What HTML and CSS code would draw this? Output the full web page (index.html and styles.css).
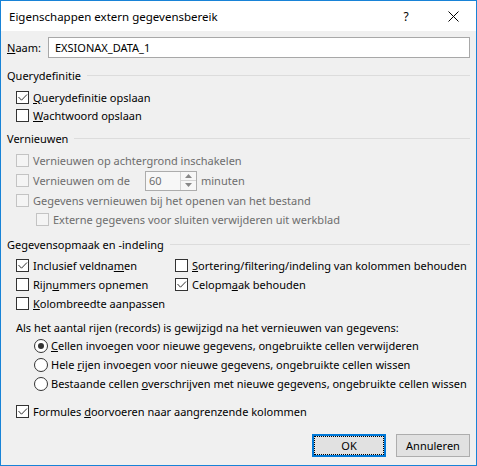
FILE: index.html
```html
<!DOCTYPE html>
<html lang="nl">
<head>
<meta charset="utf-8">
<title>Eigenschappen extern gegevensbereik</title>
<link rel="stylesheet" href="styles.css">
</head>
<body>
<div class="dialog">
  <div class="titlebar">
    <span class="title">Eigenschappen extern gegevensbereik</span>
    <div class="caption-buttons">
      <span class="cap-btn help">?</span>
      <span class="cap-btn close">
        <svg width="11" height="11" viewBox="0 0 11 11"><path d="M0.5 0.5L10.5 10.5M10.5 0.5L0.5 10.5" stroke="#000" stroke-width="1"/></svg>
      </span>
    </div>
  </div>

  <div class="content">
    <div class="name-row">
      <label class="name-label"><u>N</u>aam:</label>
      <div class="textbox">EXSIONAX_DATA_1</div>
    </div>

    <section class="group group-query">
      <div class="group-head">Querydefinitie</div>
      <div class="options">
        <div class="check row-18 checked">
          <span class="box"><svg viewBox="0 0 11 11" width="11" height="11"><path d="M1.5 5l3 3.2L10 2.5" fill="none" stroke="#333" stroke-width="1"/></svg></span>
          <span><u>Q</u>uerydefinitie opslaan</span>
        </div>
        <div class="check row-18">
          <span class="box"></span>
          <span><u>W</u>achtwoord opslaan</span>
        </div>
      </div>
    </section>

    <section class="group group-refresh">
      <div class="group-head">Vernieuwen</div>
      <div class="options">
        <div class="check row-19 disabled">
          <span class="box"></span>
          <span>Vernieuwen op achtergrond inschakelen</span>
        </div>
        <div class="check row-21 disabled">
          <span class="box"></span>
          <span class="interval-label">Vernieuwen om de</span>
          <div class="spinner">
            <span class="spin-value">60</span>
            <span class="spin-buttons">
              <span class="spin-btn"><svg width="7" height="4" viewBox="0 0 7 4"><path d="M0 4L3.5 0L7 4Z" fill="#888"/></svg></span>
              <span class="spin-btn"><svg width="7" height="4" viewBox="0 0 7 4"><path d="M0 0L3.5 4L7 0Z" fill="#888"/></svg></span>
            </span>
          </div>
          <span class="unit">minuten</span>
        </div>
        <div class="check row-19 disabled">
          <span class="box"></span>
          <span>Gegevens vernieuwen bij het openen van het bestand</span>
        </div>
        <div class="check row-19 disabled nested">
          <span class="box"></span>
          <span>Externe gegevens voor sluiten verwijderen uit werkblad</span>
        </div>
      </div>
    </section>

    <section class="group group-format">
      <div class="group-head">Gegevensopmaak en -indeling</div>
      <div class="format-grid">
        <div class="check row-19 checked">
          <span class="box"><svg viewBox="0 0 11 11" width="11" height="11"><path d="M1.5 5l3 3.2L10 2.5" fill="none" stroke="#333" stroke-width="1"/></svg></span>
          <span>Inclusief veldna<u>m</u>en</span>
        </div>
        <div class="check row-19">
          <span class="box"></span>
          <span><u>S</u>ortering/filtering/indeling van kolommen behouden</span>
        </div>
        <div class="check row-19">
          <span class="box"></span>
          <span>Rijn<u>u</u>mmers opnemen</span>
        </div>
        <div class="check row-19 checked">
          <span class="box"><svg viewBox="0 0 11 11" width="11" height="11"><path d="M1.5 5l3 3.2L10 2.5" fill="none" stroke="#333" stroke-width="1"/></svg></span>
          <span>Celopm<u>a</u>ak behouden</span>
        </div>
        <div class="check row-19">
          <span class="box"></span>
          <span><u>K</u>olombreedte aanpassen</span>
        </div>
      </div>

      <p class="rows-caption">Als het aantal rijen (records) is gewijzigd na het vernieuwen van gegevens:</p>
      <div class="radios">
        <div class="radio row-19 selected">
          <span class="ring"><span class="dot"></span></span>
          <span><u>C</u>ellen invoegen voor nieuwe gegevens, ongebruikte cellen verwijderen</span>
        </div>
        <div class="radio row-19">
          <span class="ring"></span>
          <span>Hele <u>r</u>ijen invoegen voor nieuwe gegevens, ongebruikte cellen wissen</span>
        </div>
        <div class="radio row-19">
          <span class="ring"></span>
          <span>Bestaande cellen <u>o</u>verschrijven met nieuwe gegevens, ongebruikte cellen wissen</span>
        </div>
      </div>

      <div class="check row-19 checked formulas">
        <span class="box"><svg viewBox="0 0 11 11" width="11" height="11"><path d="M1.5 5l3 3.2L10 2.5" fill="none" stroke="#333" stroke-width="1"/></svg></span>
        <span>Formules <u>d</u>oorvoeren naar aangrenzende kolommen</span>
      </div>
    </section>

    <div class="button-row">
      <button class="btn btn-default" type="button">OK</button>
      <button class="btn" type="button">Annuleren</button>
    </div>
  </div>
</div>
</body>
</html>
```

FILE: styles.css
```css
* {
  box-sizing: border-box;
}

html, body {
  margin: 0;
  padding: 0;
  background: #f0f0f0;
}

body {
  font-family: "Noto Sans", "Open Sans", sans-serif;
  font-size: 11px;
  color: #000;
}

u {
  text-decoration: underline;
  text-underline-offset: 1px;
}

/* window frame */
.dialog {
  width: 477px;
  height: 466px;
  border: 1px solid #1883d7;
  background: #f0f0f0;
  display: flex;
  flex-direction: column;
}

.titlebar {
  height: 30px;
  background: #fff;
  display: flex;
  align-items: center;
  justify-content: space-between;
  flex-shrink: 0;
}

.title {
  padding-left: 8px;
  font-size: 11.5px;
  margin-top: 1px;
}

.caption-buttons {
  display: flex;
  height: 100%;
}

.cap-btn {
  width: 46px;
  height: 30px;
  display: flex;
  align-items: center;
  justify-content: center;
}

.cap-btn.help {
  font-size: 12px;
  padding-right: 2px;
}

/* dialog body */
.content {
  flex: 1;
  padding: 6px 6px 0 6px;
  display: flex;
  flex-direction: column;
}

.name-row {
  display: flex;
  align-items: center;
  height: 21px;
}

.name-label {
  width: 41px;
}

.textbox {
  flex: 1;
  height: 21px;
  border: 1px solid #a8a8a8;
  background: #fff;
  padding: 0 0 0 6px;
  display: flex;
  align-items: center;
}

.group-head {
  height: 19px;
  display: flex;
  align-items: center;
  gap: 6px;
}

.group-head::after {
  content: "";
  flex: 1;
  height: 1px;
  background: #dcdcdc;
}

.group-query {
  margin-top: 8px;
}

.group-refresh {
  margin-top: 5px;
}

.group-format {
  margin-top: 6px;
}

.options {
  margin-top: 3px;
  padding-left: 9px;
}

.group-format .format-grid {
  margin-top: 2px;
  padding-left: 9px;
  display: grid;
  grid-template-columns: 159px 1fr;
}

/* check boxes */
.check {
  display: flex;
  align-items: center;
  gap: 4px;
}

.row-18 { height: 18px; }
.row-19 { height: 19px; }
.row-21 { height: 21px; }

.box {
  width: 13px;
  height: 13px;
  border: 1px solid #333;
  background: #fff;
  flex-shrink: 0;
  display: flex;
}

.check.disabled {
  color: #6d6d6d;
}

.check.disabled .box {
  border-color: #c3c3c3;
  background: #f4f4f4;
}

.check.nested {
  padding-left: 20px;
}

.interval-label {
  width: 108px;
}

/* numeric spinner */
.spinner {
  width: 52px;
  height: 20px;
  border: 1px solid #acacac;
  background: #f7f7f7;
  display: flex;
}

.spin-value {
  flex: 1;
  padding-left: 3px;
  display: flex;
  align-items: center;
}

.spin-buttons {
  width: 16px;
  border-left: 1px solid #d4d4d4;
  display: flex;
  flex-direction: column;
}

.spin-btn {
  flex: 1;
  display: flex;
  align-items: center;
  justify-content: center;
}

.spin-btn + .spin-btn {
  border-top: 1px solid #d4d4d4;
}

/* update behaviour */
.rows-caption {
  margin: 6px 0 0 9px;
  height: 17px;
  display: flex;
  align-items: center;
}

.radios {
  padding-left: 27px;
}

.radio {
  display: flex;
  align-items: center;
  gap: 3px;
}

.ring {
  width: 14px;
  height: 14px;
  border: 1px solid #333;
  border-radius: 50%;
  background: #fff;
  flex-shrink: 0;
  display: flex;
  align-items: center;
  justify-content: center;
}

.dot {
  width: 6px;
  height: 6px;
  border-radius: 50%;
  background: #333;
}

.formulas {
  margin-top: 9px;
  padding-left: 9px;
}

/* buttons */
.button-row {
  margin-top: 13px;
  display: flex;
  justify-content: flex-end;
  gap: 10px;
}

.btn {
  width: 74px;
  height: 23px;
  font: inherit;
  color: #000;
  background: #e1e1e1;
  border: 1px solid #adadad;
  padding: 0;
}

.btn-default {
  border: 2px solid #0078d7;
  outline: 1px dotted #000;
  outline-offset: -3px;
}
```
